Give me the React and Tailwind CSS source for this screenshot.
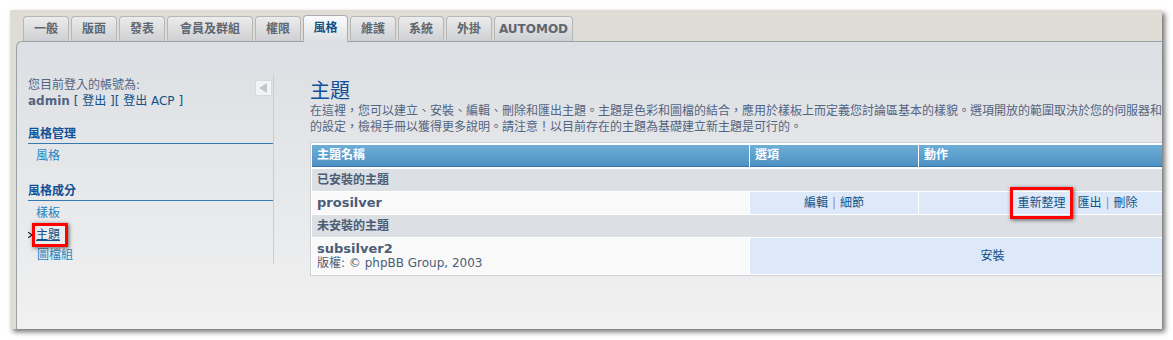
import React from 'react';

const tabs = [
  { name: '一般', w: 'w-[46px]' },
  { name: '版面', w: 'w-[46px]' },
  { name: '發表', w: 'w-[46px]' },
  { name: '會員及群組', w: 'w-[86px]' },
  { name: '權限', w: 'w-[46px]' },
  { name: '風格', w: 'w-[45px]', active: true },
  { name: '維護', w: 'w-[46px]' },
  { name: '系統', w: 'w-[46px]' },
  { name: '外掛', w: 'w-[46px]' },
  { name: 'AUTOMOD', w: 'w-[79px]' },
];

function RedBox({ className }) {
  return (
    <span
      className={
        'pointer-events-none absolute border-[3px] border-[#ff0000] shadow-[1px_1px_4px_rgba(0,0,0,0.6)] ' + className
      }
    />
  );
}

function Sep() {
  return <span className="mx-[4px] text-[#8e8cc4]">|</span>;
}

export default function App() {
  return (
    <div className="w-[1173px] h-[340px] bg-white pt-[10px] pl-[10px] overflow-hidden font-['DejaVu_Sans','Noto_Sans_CJK_TC',sans-serif] text-[12px]">
      <div className="w-[1152px] h-[319px] bg-[#dfdcd5] shadow-[3px_3px_5px_rgba(0,0,0,0.55)] flex flex-col pl-[6px] pt-[6px]">
        {/* tabs */}
        <div className="flex items-end gap-[2px] pl-[7px] h-[25px] relative z-10">
          {tabs.map((t) =>
            t.active ? (
              <div
                key={t.name}
                className={t.w + ' h-[27px] -mb-[1px] text-center border border-b-0 border-[#a9adb1] rounded-t-[4px] bg-linear-to-b from-[#fbfbfc] to-[#dcdfe3] text-[#105289] font-bold leading-[25px]'}
              >
                {t.name}
              </div>
            ) : (
              <div
                key={t.name}
                className={t.w + ' h-[25px] text-center border border-b-0 border-[#b5b7b9] rounded-t-[4px] bg-linear-to-b from-[#ececec] to-[#ced0d3] text-[#5f6770] font-bold leading-[25px]'}
              >
                {t.name}
              </div>
            )
          )}
        </div>

        {/* panel */}
        <div className="flex-1 border-l border-t border-[#9ca1a6] rounded-tl-[6px] bg-linear-to-b from-[#dcdfe3] to-[#f1f1f1] overflow-hidden flex pl-[11px] pt-[33px]">
          {/* sidebar */}
          <div className="relative w-[246px] h-[189px] shrink-0 border-r border-[#c9cdd2] pt-[2px]">
            <button className="absolute right-[1px] top-[5px] w-[17px] h-[16px] bg-[#f2f3f4] border border-[#d6d9dc] rounded-[2px] flex items-center justify-center">
              <svg width="9" height="10" viewBox="0 0 9 10">
                <path d="M8 0 L8 10 L0 5 Z" fill="#c3c7cb" />
              </svg>
            </button>
            <div className="leading-[16px] text-[#536482]">您目前登入的帳號為:</div>
            <div className="leading-[16px] text-[#536482]">
              <b>admin</b>{' '}
              <span className="text-[#105289]">[ 登出 ][ 登出 ACP ]</span>
            </div>

            <h3 className="mt-[17px] leading-[16px] font-bold text-[#115098] border-b border-[#3479b0] pb-px">風格管理</h3>
            <ul className="mt-[2px] leading-[21px]">
              <li className="pl-[8px] text-[#1e84c2]">風格</li>
            </ul>

            <h3 className="mt-[16px] leading-[16px] font-bold text-[#115098] border-b border-[#3479b0] pb-px">風格成分</h3>
            <ul className="mt-[2px] leading-[21px]">
              <li className="pl-[8px] text-[#1e84c2]">樣板</li>
              <li className="pl-[8px] relative h-[21px] flex items-center">
                <svg className="absolute left-0 top-[8px]" width="4" height="6" viewBox="0 0 4 6">
                  <path d="M0 0 L4 3 L0 6" stroke="#222" strokeWidth="1.2" fill="none" />
                </svg>
                <span className="relative block leading-[16px] text-[#105289] underline">
                  主題
                  <RedBox className="-left-[4px] -right-[8px] -top-[4px] -bottom-[4px]" />
                </span>
              </li>
              <li className="pl-[9px] text-[#1e84c2]">圖檔組</li>
            </ul>
          </div>

          {/* main */}
          <div className="ml-[36px] w-[930px] shrink-0 pt-[4px]">
            <h1 className="text-[20px] leading-[24px] text-[#115098] font-normal">主題</h1>
            <p className="leading-[16px] text-[#536482] whitespace-nowrap">
              在這裡，您可以建立、安裝、編輯、刪除和匯出主題。主題是色彩和圖檔的結合，應用於樣板上而定義您討論區基本的樣貌。選項開放的範圍取決於您的伺服器和 phpBB
              <br />
              的設定，檢視手冊以獲得更多說明。請注意！以目前存在的主題為基礎建立新主題是可行的。
            </p>

            <div className="mt-[7px] w-[928px] border border-[#cdd0d4] bg-white pt-[2px] px-[1px] pb-px">
              {/* header */}
              <div className="grid grid-cols-[437px_168px_1fr] gap-x-px h-[22px]">
                <div className="bg-linear-to-b from-[#6eafd7] to-[#4e90c3] border-b border-[#2f72a6] pl-[5px] text-white font-bold leading-[21px]">主題名稱</div>
                <div className="bg-linear-to-b from-[#6eafd7] to-[#4e90c3] border-b border-[#2f72a6] pl-[5px] text-white font-bold leading-[21px]">選項</div>
                <div className="bg-linear-to-b from-[#6eafd7] to-[#4e90c3] border-b border-[#2f72a6] pl-[5px] text-white font-bold leading-[21px]">動作</div>
              </div>

              <div className="mt-[2px] h-[22px] bg-[#dcdfe3] pl-[5px] leading-[22px] font-bold text-[#4c5d77]">已安裝的主題</div>

              <div className="mt-px grid grid-cols-[437px_168px_1fr] gap-x-px h-[22px] leading-[22px]">
                <div className="bg-[#f9f9f9] pl-[5px] font-bold text-[13px] text-[#4c5d77]">prosilver</div>
                <div className="bg-[#dde9f9] text-center text-[#105289]">
                  編輯<Sep />細節
                </div>
                <div className="bg-[#dde9f9] flex items-center justify-center text-[#105289]">
                  <span className="relative block leading-[16px]">
                    重新整理
                    <RedBox className="-left-[7px] -right-[8px] -top-[8px] -bottom-[8px]" />
                  </span>
                  <Sep />匯出<Sep />刪除
                </div>
              </div>

              <div className="mt-px h-[22px] bg-[#dcdfe3] pl-[5px] leading-[22px] font-bold text-[#4c5d77]">未安裝的主題</div>

              <div className="mt-px grid grid-cols-[437px_1fr] gap-x-px h-[36px]">
                <div className="bg-[#f9f9f9] pl-[5px] pt-[3px] text-[#4c5d77]">
                  <div className="font-bold text-[13px] leading-[15px]">subsilver2</div>
                  <div className="leading-[15px]">版權: © phpBB Group, 2003</div>
                </div>
                <div className="bg-[#dde9f9] flex items-center justify-center pr-px text-[#105289]">安裝</div>
              </div>
            </div>
          </div>
        </div>
      </div>
    </div>
  );
}
